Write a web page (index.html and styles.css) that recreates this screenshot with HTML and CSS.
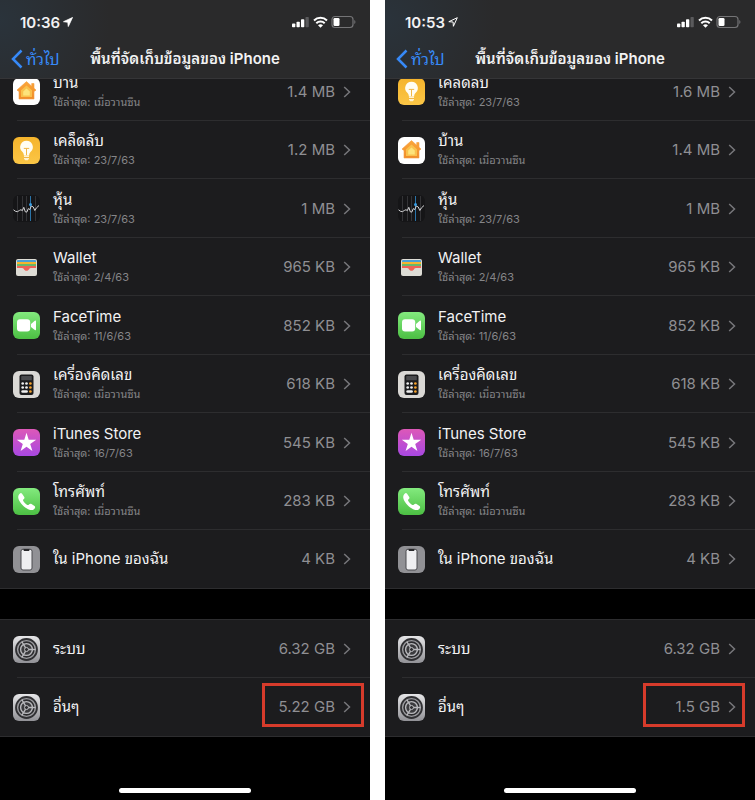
FILE: index.html
```
<!DOCTYPE html>
<html lang="th">
<head>
<meta charset="utf-8">
<meta name="viewport" content="width=device-width, initial-scale=1">
<title>พื้นที่จัดเก็บข้อมูลของ iPhone</title>
<link rel="stylesheet" href="styles.css">
</head>
<body>
<svg class="sprite" aria-hidden="true">
  <defs>
    <linearGradient id="g-house" x1="0" y1="0" x2="0" y2="1"><stop offset="0" stop-color="#fba63a"/><stop offset="1" stop-color="#f08c2a"/></linearGradient>
    <linearGradient id="g-tips" x1="0" y1="0" x2="0" y2="1"><stop offset="0" stop-color="#f5b42c"/><stop offset="1" stop-color="#fbc646"/></linearGradient>
    <linearGradient id="g-green" x1="0" y1="0" x2="0" y2="1"><stop offset="0" stop-color="#83ea7e"/><stop offset="1" stop-color="#4cbf43"/></linearGradient>
    <linearGradient id="g-itunes" x1="0" y1="0" x2="0" y2="1"><stop offset="0" stop-color="#dd58b8"/><stop offset="1" stop-color="#a848e2"/></linearGradient>
    <linearGradient id="g-gear" x1="0" y1="0" x2="0" y2="1"><stop offset="0" stop-color="#e6e6e8"/><stop offset="1" stop-color="#919196"/></linearGradient>
  </defs>
  <symbol id="home" viewBox="0 0 27 27">
    <rect width="27" height="27" rx="6" fill="#fff"/>
    <path d="M13.500 3.600 4 12l1.200 1.200L6 12.700V21h15v-8.300l.8.5L23 12l-2-1.800V5.500h-2.300v2.700z" fill="url(#g-house)" stroke="#f3a044" stroke-width=".6" stroke-linejoin="round"/>
    <path d="M13.500 7.500 8 12.200V19h11v-6.800z" fill="#f9c14c"/>
    <path d="m13.500 10.500-3.300 3V17.500h6.600v-4z" fill="#fde37b"/>
  </symbol>
  <symbol id="tips" viewBox="0 0 27 27">
    <rect width="27" height="27" rx="6" fill="url(#g-tips)"/>
    <path d="M13.500 3.800a6.300 6.300 0 0 0-4.200 11c1 1 1.400 2 1.600 3.700h5.200c.2-1.700.6-2.700 1.600-3.700a6.300 6.300 0 0 0-4.200-11z" fill="#fffdf2"/>
    <path d="M11 18.400h5v3.300l-1.200 1.600h-2.600L11 21.700z" fill="#fff2cf"/>
    <path d="M10.800 11.400h5.400M13.500 11.400v6.800M11 20.500h5" stroke="#f0b747" stroke-width="1" fill="none"/>
  </symbol>
  <symbol id="stocks" viewBox="0 0 27 27">
    <rect width="27" height="27" rx="6" fill="#151517"/>
    <path d="M4.500 1v25M9.500 1v25M13.500 1v25M22.500 1v25" stroke="#333336" stroke-width="1"/>
    <path d="M17.500 1v25" stroke="#2b74a8" stroke-width="1"/>
    <path d="m.5 14.800 2 1.500 2 .3 2-1.200 1.500-.7 1.300 1 1.500-3.400 1.500 4.500 1.500.3 1.500-3.500 1.500 1 1.500-3.600 2 1 1.500 3.500 1.500-2.500L26 10.500" fill="none" stroke="#d5d5d7" stroke-width="1"/>
    <circle cx="17.500" cy="9.500" r="1.500" fill="#3a9fe5"/>
  </symbol>
  <symbol id="wallet" viewBox="0 0 27 27">
    <rect x="3" y="5" width="21" height="17" rx="2" fill="#dddcd5"/>
    <path d="M4 7a1 1 0 0 1 1-1h17a1 1 0 0 1 1 1v1H4z" fill="#4b9fd4"/>
    <path d="M4 8h19v2H4z" fill="#f5b52e"/>
    <path d="M4 10h19v2H4z" fill="#67b96a"/>
    <path d="M4 12h19v2h-5c-.9 0-1.500.4-1.800 1-.6 1.200-1.500 1.800-2.700 1.800s-2.100-.6-2.700-1.800c-.3-.6-.9-1-1.800-1H4z" fill="#ee6156"/>
  </symbol>
  <symbol id="facetime" viewBox="0 0 27 27">
    <rect width="27" height="27" rx="6" fill="url(#g-green)"/>
    <rect x="4" y="7.300" width="13.200" height="12.200" rx="3" fill="#fff"/>
    <path d="m18 12 3.800-3.300c.6-.5 1.200-.2 1.200.5v8.400c0 .7-.6 1-1.200.5L18 14.900z" fill="#fff"/>
  </symbol>
  <symbol id="calculator" viewBox="0 0 27 27">
    <rect width="27" height="27" rx="6" fill="#dad8d5"/>
    <rect x="6.500" y="3.500" width="14" height="20.500" rx="2" fill="#1b1b1d"/>
    <rect x="8.200" y="5" width="10.600" height="4.300" rx=".6" fill="#4a4a4d"/>
    <g fill="#eee"><circle cx="9.700" cy="12.500" r="1.350"/><circle cx="13.500" cy="12.500" r="1.350"/><circle cx="9.700" cy="16.500" r="1.350"/><circle cx="13.500" cy="16.500" r="1.350"/><rect x="8.300" y="19.200" width="6.600" height="2.600" rx="1.300"/></g>
    <g fill="#f7a32d"><circle cx="17.400" cy="12.500" r="1.350"/><circle cx="17.400" cy="16.500" r="1.350"/><circle cx="17.400" cy="20.500" r="1.350"/></g>
  </symbol>
  <symbol id="itunes" viewBox="0 0 27 27">
    <rect width="27" height="27" rx="6" fill="url(#g-itunes)"/>
    <path d="m13.500 3.800 2.200 6.900h7.500l-6 4.300 2.200 7-5.900-4.300L7.600 22l2.200-7-6-4.300h7.500z" fill="#fff"/>
  </symbol>
  <symbol id="phone" viewBox="0 0 27 27">
    <rect width="27" height="27" rx="6" fill="url(#g-green)"/>
    <path d="M6 6.400c1-1.400 2-2 2.900-.8l2.200 3.100c.7 1 .4 1.700-.8 2.900-.4.400-.3.800 0 1.300 1.100 1.700 2.400 3 4.100 4 .5.300.9.300 1.300-.1 1-1 1.800-1.500 2.800-.8l3 2.100c1 .8.8 1.800-.2 2.800-2.100 2-5.200 1.300-8.700-1.200-2.300-1.600-4.200-3.600-5.700-6C5 10.700 4.700 8.400 6 6.400z" fill="#fff"/>
  </symbol>
  <symbol id="device" viewBox="0 0 27 27">
    <rect width="27" height="27" rx="6" fill="#919195"/>
    <rect x="8" y="3.200" width="11" height="20.800" rx="2" fill="#efeff1" stroke="#4b4b4f"/>
    <path d="M10.500 3h6v.8c0 .8-.5 1.200-1.200 1.200h-3.600c-.7 0-1.200-.4-1.200-1.200z" fill="#29292c"/>
  </symbol>
  <symbol id="gear" viewBox="0 0 27 27">
    <rect width="27" height="27" rx="6" fill="url(#g-gear)"/>
    <circle cx="13.500" cy="13.500" r="10.500" fill="#9b9b9f" stroke="#303033" stroke-width="1.800"/>
    <circle cx="13.500" cy="13.500" r="7.200" fill="#3b3b3e" stroke="#2b2b2e" stroke-width="2"/>
    <circle cx="13.500" cy="13.500" r="5.900" fill="none" stroke="#b9b9bd" stroke-width="1.400"/>
    <path d="M14.500 13.500h8M13 12.600 8.800 5.500M13 14.400 8.800 21.500" stroke="#b9b9bd" stroke-width="1.400"/>
    <circle cx="13.500" cy="13.500" r="2" fill="#303033" stroke="#b9b9bd"/>
  </symbol>
  <symbol id="chevron" viewBox="0 0 8 12"><path d="m1.200 1 5.300 5-5.300 5" fill="none" stroke="#77777b" stroke-width="1.500"/></symbol>
  <symbol id="back" viewBox="0 0 12 20"><path d="M10.500 1.500 2 10l8.500 8.500" fill="none" stroke="#378af8" stroke-width="2.500"/></symbol>
  <symbol id="location" viewBox="0 0 10 10"><path d="M9.500.5.500 4.700l4.300.5.500 4.300z" fill="#fff" stroke="#fff" stroke-width=".8" stroke-linejoin="round"/></symbol>
  <symbol id="location-outline" viewBox="0 0 10 10"><path d="M9.300.7.800 4.700l4.300.3.300 4.300z" fill="none" stroke="#fff" stroke-width="1" stroke-linejoin="round"/></symbol>
  <symbol id="status" viewBox="0 0 64 14">
    <rect x="0" y="8.500" width="3.300" height="3.800" rx=".8" fill="#fff"/><rect x="4.500" y="6.700" width="3.300" height="5.600" rx=".8" fill="#fff"/><rect x="9" y="4.300" width="3.300" height="8" rx=".8" fill="#fff"/><rect x="13.500" y="2" width="3.300" height="10.300" rx=".8" fill="#5a5a5c"/>
    <path d="M22 5.500a9.300 9.300 0 0 1 13 0M24.300 8.200a6 6 0 0 1 8.400 0" fill="none" stroke="#fff" stroke-width="2"/>
    <path d="M28.500 12.700 26 10.300a3.700 3.700 0 0 1 5 0z" fill="#fff"/>
    <rect x="40" y="1.500" width="21" height="11" rx="3" fill="none" stroke="#747476" stroke-width="1.200"/>
    <rect x="41.500" y="3" width="6" height="8" rx="1.300" fill="#fff"/>
    <path d="M62.300 5c1.500.7 1.500 3.200 0 4z" fill="#747476"/>
  </symbol>
</svg>
<main class="screens">
  <section class="screen" aria-label="10:36">
    <header class="header">
      <div class="status"><time>10:36</time><svg class="locate"><use href="#location"/></svg><svg class="signals"><use href="#status"/></svg></div>
      <nav class="nav"><a class="back" href="#"><svg><use href="#back"/></svg>ทั่วไป</a><h1>พื้นที่จัดเก็บข้อมูลของ iPhone</h1></nav>
    </header>
    <ul class="list apps">
      <li><a class="row" href="#"><svg class="icon"><use href="#home"/></svg><span class="label"><b>บ้าน</b><small>ใช้ล่าสุด: เมื่อวานซืน</small></span><span class="size">1.4 MB</span><svg class="chevron"><use href="#chevron"/></svg></a></li>
      <li><a class="row" href="#"><svg class="icon"><use href="#tips"/></svg><span class="label"><b>เคล็ดลับ</b><small>ใช้ล่าสุด: 23/7/63</small></span><span class="size">1.2 MB</span><svg class="chevron"><use href="#chevron"/></svg></a></li>
      <li><a class="row" href="#"><svg class="icon"><use href="#stocks"/></svg><span class="label"><b>หุ้น</b><small>ใช้ล่าสุด: 23/7/63</small></span><span class="size">1 MB</span><svg class="chevron"><use href="#chevron"/></svg></a></li>
      <li><a class="row" href="#"><svg class="icon"><use href="#wallet"/></svg><span class="label"><b>Wallet</b><small>ใช้ล่าสุด: 2/4/63</small></span><span class="size">965 KB</span><svg class="chevron"><use href="#chevron"/></svg></a></li>
      <li><a class="row" href="#"><svg class="icon"><use href="#facetime"/></svg><span class="label"><b>FaceTime</b><small>ใช้ล่าสุด: 11/6/63</small></span><span class="size">852 KB</span><svg class="chevron"><use href="#chevron"/></svg></a></li>
      <li><a class="row" href="#"><svg class="icon"><use href="#calculator"/></svg><span class="label"><b>เครื่องคิดเลข</b><small>ใช้ล่าสุด: เมื่อวานซืน</small></span><span class="size">618 KB</span><svg class="chevron"><use href="#chevron"/></svg></a></li>
      <li><a class="row" href="#"><svg class="icon"><use href="#itunes"/></svg><span class="label"><b>iTunes Store</b><small>ใช้ล่าสุด: 16/7/63</small></span><span class="size">545 KB</span><svg class="chevron"><use href="#chevron"/></svg></a></li>
      <li><a class="row" href="#"><svg class="icon"><use href="#phone"/></svg><span class="label"><b>โทรศัพท์</b><small>ใช้ล่าสุด: เมื่อวานซืน</small></span><span class="size">283 KB</span><svg class="chevron"><use href="#chevron"/></svg></a></li>
      <li><a class="row" href="#"><svg class="icon"><use href="#device"/></svg><span class="label"><b>ใน iPhone ของฉัน</b></span><span class="size">4 KB</span><svg class="chevron"><use href="#chevron"/></svg></a></li>
    </ul>
    <ul class="list system">
      <li><a class="row" href="#"><svg class="icon"><use href="#gear"/></svg><span class="label"><b>ระบบ</b></span><span class="size">6.32 GB</span><svg class="chevron"><use href="#chevron"/></svg></a></li>
      <li><a class="row" href="#"><svg class="icon"><use href="#gear"/></svg><span class="label"><b>อื่นๆ</b></span><span class="size">5.22 GB</span><svg class="chevron"><use href="#chevron"/></svg></a><span class="highlight highlight-before"></span></li>
    </ul>
    <div class="home-bar"></div>
  </section>
  <section class="screen" aria-label="10:53">
    <header class="header">
      <div class="status"><time>10:53</time><svg class="locate"><use href="#location-outline"/></svg><svg class="signals"><use href="#status"/></svg></div>
      <nav class="nav"><a class="back" href="#"><svg><use href="#back"/></svg>ทั่วไป</a><h1>พื้นที่จัดเก็บข้อมูลของ iPhone</h1></nav>
    </header>
    <ul class="list apps">
      <li><a class="row" href="#"><svg class="icon"><use href="#tips"/></svg><span class="label"><b>เคล็ดลับ</b><small>ใช้ล่าสุด: 23/7/63</small></span><span class="size">1.6 MB</span><svg class="chevron"><use href="#chevron"/></svg></a></li>
      <li><a class="row" href="#"><svg class="icon"><use href="#home"/></svg><span class="label"><b>บ้าน</b><small>ใช้ล่าสุด: เมื่อวานซืน</small></span><span class="size">1.4 MB</span><svg class="chevron"><use href="#chevron"/></svg></a></li>
      <li><a class="row" href="#"><svg class="icon"><use href="#stocks"/></svg><span class="label"><b>หุ้น</b><small>ใช้ล่าสุด: 23/7/63</small></span><span class="size">1 MB</span><svg class="chevron"><use href="#chevron"/></svg></a></li>
      <li><a class="row" href="#"><svg class="icon"><use href="#wallet"/></svg><span class="label"><b>Wallet</b><small>ใช้ล่าสุด: 2/4/63</small></span><span class="size">965 KB</span><svg class="chevron"><use href="#chevron"/></svg></a></li>
      <li><a class="row" href="#"><svg class="icon"><use href="#facetime"/></svg><span class="label"><b>FaceTime</b><small>ใช้ล่าสุด: 11/6/63</small></span><span class="size">852 KB</span><svg class="chevron"><use href="#chevron"/></svg></a></li>
      <li><a class="row" href="#"><svg class="icon"><use href="#calculator"/></svg><span class="label"><b>เครื่องคิดเลข</b><small>ใช้ล่าสุด: เมื่อวานซืน</small></span><span class="size">618 KB</span><svg class="chevron"><use href="#chevron"/></svg></a></li>
      <li><a class="row" href="#"><svg class="icon"><use href="#itunes"/></svg><span class="label"><b>iTunes Store</b><small>ใช้ล่าสุด: 16/7/63</small></span><span class="size">545 KB</span><svg class="chevron"><use href="#chevron"/></svg></a></li>
      <li><a class="row" href="#"><svg class="icon"><use href="#phone"/></svg><span class="label"><b>โทรศัพท์</b><small>ใช้ล่าสุด: เมื่อวานซืน</small></span><span class="size">283 KB</span><svg class="chevron"><use href="#chevron"/></svg></a></li>
      <li><a class="row" href="#"><svg class="icon"><use href="#device"/></svg><span class="label"><b>ใน iPhone ของฉัน</b></span><span class="size">4 KB</span><svg class="chevron"><use href="#chevron"/></svg></a></li>
    </ul>
    <ul class="list system">
      <li><a class="row" href="#"><svg class="icon"><use href="#gear"/></svg><span class="label"><b>ระบบ</b></span><span class="size">6.32 GB</span><svg class="chevron"><use href="#chevron"/></svg></a></li>
      <li><a class="row" href="#"><svg class="icon"><use href="#gear"/></svg><span class="label"><b>อื่นๆ</b></span><span class="size">1.5 GB</span><svg class="chevron"><use href="#chevron"/></svg></a><span class="highlight highlight-after"></span></li>
    </ul>
    <div class="home-bar"></div>
  </section>
</main>
</body>
</html>
```
FILE: styles.css
```
* { box-sizing: border-box; }
body {
  margin: 0;
  background: #fff;
  color: #f2f2f3;
  font-family: Inter, Thonburi, "Noto Sans Thai Looped", Loma, Garuda, "Noto Sans Thai", "Noto Sans", sans-serif;
}
a { color: inherit; text-decoration: none; }
svg { display: block; flex: none; }
.sprite { position: absolute; width: 0; height: 0; }
.screens {
  display: grid;
  grid-template-columns: 1fr 1fr;
  gap: 15px;
  min-height: 100vh;
}
.screen {
  display: flex;
  flex-direction: column;
  min-width: 0;
  background: #000;
}
.header {
  position: relative;
  z-index: 1;
  padding-top: 10px;
  border-bottom: 1px solid #353537;
  background: radial-gradient(circle at 0 20px, #2a333b, #2a2a2b 110px);
}
.status {
  display: flex;
  align-items: center;
  height: 24px;
  padding: 0 14px 0 20px;
  font-size: 15px;
  font-weight: 600;
}
.locate { width: 10px; height: 10px; margin-left: 3px; }
.signals { width: 64px; height: 14px; margin-left: auto; }
.nav {
  display: grid;
  grid-template-columns: 1fr auto 1fr;
  align-items: center;
  height: 44px;
  padding: 6px 11px 0;
  line-height: 28px;
}
.back {
  display: flex;
  align-items: center;
  gap: 3px;
  color: #378af8;
  font-size: 16px;
}
.back svg { width: 12px; height: 20px; }
.nav h1 { margin: 0; font-size: 15px; font-weight: 600; white-space: nowrap; }
.list { margin: 0; padding: 0; list-style: none; background: #1c1c1e; }
.list li { position: relative; }
.row {
  display: flex;
  align-items: center;
  height: 58px;
  padding: 0 19px 0 13px;
}
.apps { margin-top: -17px; border-bottom: 1px solid #2d2d2f; }
.apps li:nth-child(odd) .row { height: 59px; }
.apps li:last-child .row { height: 58px; }
.system { margin-top: 30px; border: solid #2d2d2f; border-width: 1px 0; }
.list li:not(:last-child)::after {
  content: "";
  position: absolute;
  right: 0;
  bottom: 0;
  left: 17px;
  height: 1px;
  background: #2d2d2f;
}
.icon { width: 27px; height: 27px; }
.label { display: flex; flex: 1; flex-direction: column; min-width: 0; margin-left: 13px; }
.label b { font-size: 15px; font-weight: 400; line-height: 20px; white-space: nowrap; }
.label small { color: #858588; font-size: 11px; line-height: 18px; white-space: nowrap; }
.size { color: #8f8f93; font-size: 15px; line-height: 20px; }
.chevron { width: 8px; height: 12px; margin-left: 8px; }
.highlight {
  position: absolute;
  top: 5px;
  width: 102px;
  height: 44px;
  border: 3px solid #d63b2b;
  pointer-events: none;
}
.highlight-before { right: 6px; }
.highlight-after { right: 10px; }
.home-bar {
  width: 132px;
  height: 5px;
  margin: auto auto 7px;
  border-radius: 3px;
  background: #fff;
}
```
